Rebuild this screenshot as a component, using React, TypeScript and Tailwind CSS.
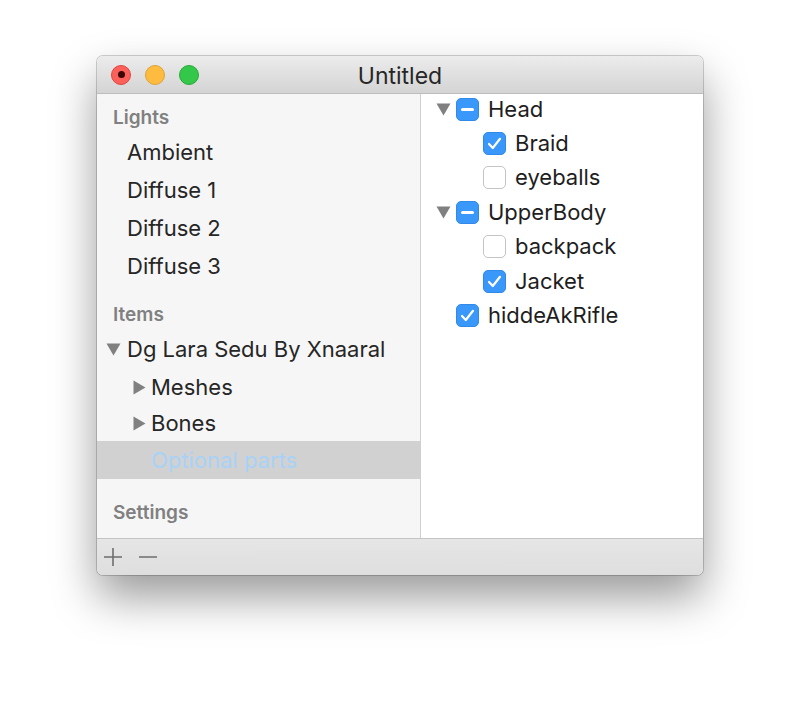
import React from "react";

const font = { fontFamily: "Inter, 'Noto Sans', 'Liberation Sans', sans-serif" };

function DownTri({ className }: { className?: string }) {
  return (
    <svg width="15" height="13" viewBox="0 0 15 13" className={className}>
      <path d="M0.5 0.5 L14.5 0.5 L7.5 12.5 Z" fill="#808080" />
    </svg>
  );
}
function RightTri({ className }: { className?: string }) {
  return (
    <svg width="13" height="15" viewBox="0 0 13 15" className={className}>
      <path d="M0.5 0.5 L12.5 7.5 L0.5 14.5 Z" fill="#808080" />
    </svg>
  );
}

function Check({ state }: { state: "on" | "off" | "mixed" }) {
  if (state === "off") {
    return <div className="w-[23px] h-[23px] rounded-[5px] border border-[#c4c4c4] bg-white shrink-0" />;
  }
  return (
    <div className="w-[23px] h-[23px] rounded-[5px] bg-[#3b98fb] border border-[#3389e8] shrink-0 flex items-center justify-center">
      {state === "on" ? (
        <svg width="15" height="13" viewBox="0 0 15 13">
          <path d="M2 7 L5.8 11 L13 1.8" fill="none" stroke="white" strokeWidth="2.2" strokeLinecap="round" strokeLinejoin="round" />
        </svg>
      ) : (
        <div className="w-[13px] h-[3px] rounded-full bg-white" />
      )}
    </div>
  );
}

function SideHeader({ children }: { children: React.ReactNode }) {
  return (
    <div className="h-[30px] flex items-center pl-[16px] text-[19px] font-semibold text-[#808080]">
      {children}
    </div>
  );
}

function SideItem({
  children,
  indent = 30,
  tri,
  selected,
  h = "h-[38px]",
}: {
  children: React.ReactNode;
  indent?: number;
  tri?: "down" | "right";
  selected?: boolean;
  h?: string;
}) {
  return (
    <div className={`${h} flex items-center text-[22px] ${selected ? "bg-[#d1d1d1] text-[#a8d2f8]" : "text-[#262626]"}`}>
      {tri === "down" && (
        <div className="w-[30px] flex justify-end pr-[6px]">
          <DownTri />
        </div>
      )}
      {tri === "right" && (
        <div className="w-[54px] flex justify-end pr-[5px]">
          <RightTri />
        </div>
      )}
      {!tri && <div style={{ width: indent }} />}
      <span>{children}</span>
    </div>
  );
}

function TreeRow({ level, tri, state, label }: { level: number; tri?: boolean; state: "on" | "off" | "mixed"; label: string }) {
  return (
    <div className="h-[34.4px] flex items-center text-[22px] text-[#1e1e1e]">
      <div className="w-[35px] shrink-0 flex justify-end pr-[5px]">{tri && <DownTri />}</div>
      {level === 1 && <div className="w-[27px] shrink-0" />}
      <Check state={state} />
      <span className="ml-[9px]">{label}</span>
    </div>
  );
}

export default function App() {
  return (
    <div className="w-[800px] h-[714px] bg-white pt-[56px] pl-[97px]" style={font}>
      <div className="w-[606px] h-[519px] rounded-[6px] flex flex-col overflow-hidden shadow-[0_22px_45px_rgba(0,0,0,0.4),0_0_0_1px_rgba(0,0,0,0.18)]">
        {/* Title bar */}
        <div className="h-[38px] shrink-0 bg-gradient-to-b from-[#ececec] to-[#d5d4d5] border-b border-[#bdbdbd] flex items-center relative">
          <div className="flex items-center pl-[14px] gap-[14px]">
            <div className="w-[20px] h-[20px] rounded-full bg-[#fc605b] border border-[#e0443e] flex items-center justify-center">
              <div className="w-[7px] h-[7px] rounded-full bg-[#3b0605]" />
            </div>
            <div className="w-[20px] h-[20px] rounded-full bg-[#fdbc40] border border-[#dea236]" />
            <div className="w-[20px] h-[20px] rounded-full bg-[#34c84a] border border-[#27aa35]" />
          </div>
          <div className="absolute inset-0 pt-[3px] flex items-center justify-center text-[23px] text-[#262626] pointer-events-none">
            Untitled
          </div>
        </div>

        {/* Content */}
        <div className="flex-1 flex min-h-0">
          <div className="w-[324px] shrink-0 bg-[#f6f6f6] border-r border-[#cfcfcf] pt-[9px]">
            <SideHeader>Lights</SideHeader>
            <SideItem>Ambient</SideItem>
            <SideItem>Diffuse 1</SideItem>
            <SideItem>Diffuse 2</SideItem>
            <SideItem>Diffuse 3</SideItem>
            <div className="h-[15px]" />
            <SideHeader>Items</SideHeader>
            <SideItem tri="down">Dg Lara Sedu By Xnaaral</SideItem>
            <SideItem tri="right">Meshes</SideItem>
            <SideItem tri="right" h="h-[35px]">
              Bones
            </SideItem>
            <SideItem indent={54} selected>
              Optional parts
            </SideItem>
            <div className="h-[19px]" />
            <SideHeader>Settings</SideHeader>
          </div>
          <div className="flex-1 bg-white">
            <div className="-mt-[2px]">
              <TreeRow level={0} tri state="mixed" label="Head" />
              <TreeRow level={1} state="on" label="Braid" />
              <TreeRow level={1} state="off" label="eyeballs" />
              <TreeRow level={0} tri state="mixed" label="UpperBody" />
              <TreeRow level={1} state="off" label="backpack" />
              <TreeRow level={1} state="on" label="Jacket" />
              <TreeRow level={0} state="on" label="hiddeAkRifle" />
            </div>
          </div>
        </div>

        {/* Bottom bar */}
        <div className="h-[37px] shrink-0 border-t border-[#c4c4c4] bg-gradient-to-b from-[#e6e6e6] to-[#dedede] flex items-center pl-[6px] gap-[15px]">
          <svg width="20" height="20" viewBox="0 0 20 20">
            <path d="M10 1 V19 M1 10 H19" stroke="#6e6e6e" strokeWidth="1.6" />
          </svg>
          <svg width="20" height="20" viewBox="0 0 20 20">
            <path d="M1 10 H19" stroke="#6e6e6e" strokeWidth="1.6" />
          </svg>
        </div>
      </div>
    </div>
  );
}
